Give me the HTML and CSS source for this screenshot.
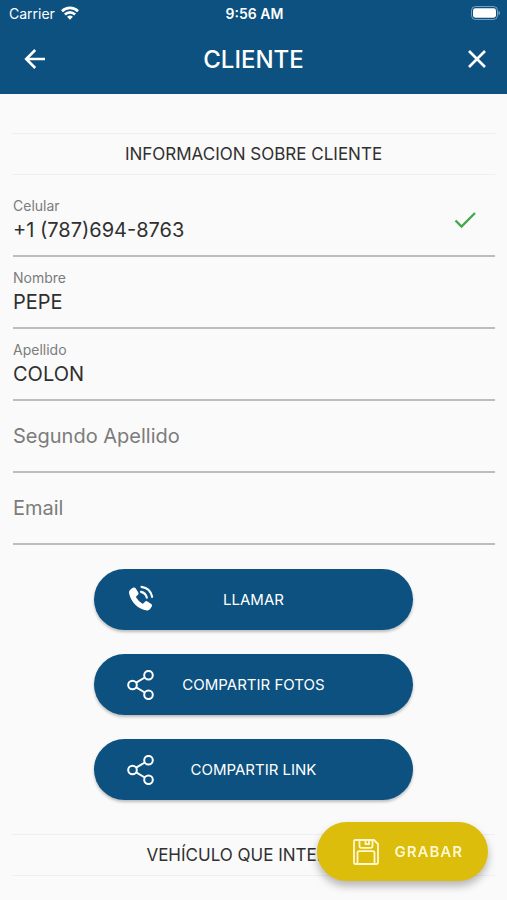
FILE: index.html
```html
<!DOCTYPE html>
<html lang="es">
<head>
	<meta charset="utf-8" />
	<meta name="viewport" content="width=device-width,initial-scale=1.0" />
	<title>Cliente</title>
	<link rel="stylesheet" href="styles.css">
</head>
<body>
<header class="header">
	<div class="status">
		<div class="carrier">
			<span>Carrier</span>
			<svg width="18" height="14" viewBox="0 0 18 14" fill="none" stroke="#fff" stroke-width="2.6">
				<path d="M1 5.2a11.4 11.4 0 0 1 16 0"/>
				<path d="M3.9 8.5a7.2 7.2 0 0 1 10.2 0"/>
				<path d="M9 13.8l-2.9-3a4.2 4.2 0 0 1 5.8 0z" fill="#fff" stroke="none"/>
			</svg>
		</div>
		<span class="time">9:56 AM</span>
		<div class="battery">
			<svg width="31" height="14" viewBox="0 0 31 14">
				<rect x="2.5" y="0.5" width="26" height="13" rx="4" fill="none" stroke="#fff" stroke-opacity="0.45"/>
				<rect x="4" y="2.3" width="23" height="9.4" rx="2.4" fill="#fff"/>
				<path d="M29.5 4.8q1.5.8 1.5 2.2t-1.5 2.2z" fill="#fff" fill-opacity="0.5"/>
			</svg>
		</div>
	</div>
	<div class="navbar">
		<button type="button" class="icon-btn back" aria-label="Volver">
			<svg width="22" height="22" viewBox="0 0 22 22" fill="none" stroke="#fff" stroke-width="2.6">
				<path d="M21 11H3M11.2 2L2.2 11l9 9"/>
			</svg>
		</button>
		<h1>CLIENTE</h1>
		<button type="button" class="icon-btn close" aria-label="Cerrar">
			<svg width="22" height="22" viewBox="0 0 22 22" fill="none" stroke="#fff" stroke-width="2.6">
				<path d="M3 3l16 16M19 3L3 19"/>
			</svg>
		</button>
	</div>
</header>

<main class="content">
	<h2 class="section-title">INFORMACION SOBRE CLIENTE</h2>
	<form class="form">
		<div class="field">
			<label for="celular">Celular</label>
			<input type="tel" id="celular" value="+1 (787)694-8763">
			<svg class="check" width="24" height="18" viewBox="0 0 24 18" fill="none" stroke="#43a94c" stroke-width="2.4">
				<path d="M2.5 9.5l6 6L22 2"/>
			</svg>
		</div>
		<div class="field">
			<label for="nombre">Nombre</label>
			<input type="text" id="nombre" value="PEPE">
		</div>
		<div class="field">
			<label for="apellido">Apellido</label>
			<input type="text" id="apellido" value="COLON">
		</div>
		<div class="field empty">
			<label for="apellido2">Segundo Apellido</label>
			<input type="text" id="apellido2">
		</div>
		<div class="field empty">
			<label for="email">Email</label>
			<input type="email" id="email">
		</div>
	</form>

	<div class="actions">
		<button type="button" class="btn">
			<svg width="28" height="30" viewBox="0 0 28 30" fill="none">
				<path d="M3.4 4.6L5.8 2.8Q7.6 1.8 8.8 3.4l2.5 4q.8 1.5-.5 2.6L9.3 11.3q-.5.6-.1 1.3 2.2 3.8 6 5.9.8.4 1.3-.2l1.4-1.5q1-1.2 2.5-.4l3.9 2.5q1.5 1.1.5 2.6l-1.9 2.8q-1 1.3-2.9 1.1-6.8-.7-11.7-5.6T2 8q-.2-2 1.4-3.4z" fill="#fff"/>
				<path d="M14 6.8q4.8 1 5.8 5.8M14.5 1.8q9 1.300 10.600 10" stroke="#fff" stroke-width="2.2" stroke-linecap="round"/>
			</svg>
			<span>LLAMAR</span>
		</button>
		<button type="button" class="btn">
			<svg width="28" height="30" viewBox="0 0 28 30" fill="none" stroke="#fff" stroke-width="2">
				<circle cx="5.5" cy="15" r="4.3"/>
				<circle cx="21.5" cy="5.2" r="4.3"/>
				<circle cx="21.5" cy="24.8" r="4.3"/>
				<path d="M9.2 12.7l8.6-5.2M9.2 17.3l8.6 5.2"/>
			</svg>
			<span>COMPARTIR FOTOS</span>
		</button>
		<button type="button" class="btn">
			<svg width="28" height="30" viewBox="0 0 28 30" fill="none" stroke="#fff" stroke-width="2">
				<circle cx="5.5" cy="15" r="4.3"/>
				<circle cx="21.5" cy="5.2" r="4.3"/>
				<circle cx="21.5" cy="24.8" r="4.3"/>
				<path d="M9.2 12.7l8.6-5.2M9.2 17.3l8.6 5.2"/>
			</svg>
			<span>COMPARTIR LINK</span>
		</button>
	</div>

	<h2 class="section-title">VEHÍCULO QUE INTERESA</h2>
</main>

<button type="button" class="save">
	<svg width="26" height="26" viewBox="0 0 26 26" fill="none" stroke="#fff8d0" stroke-width="1.8" stroke-linejoin="round">
		<path d="M2.5 1H21l4 4v18.5q0 1.500-1.500 1.500h-21Q1 25 1 23.500v-21Q1 1 2.500 1z"/>
		<path d="M6.500 1v6q0 1.800 1.800 1.800h9.400q1.800 0 1.800-1.800V1M12.500 1v4.200h3.500V1"/>
		<path d="M4.500 25V14q0-1.800 1.800-1.800h13.400q1.800 0 1.800 1.800v11"/>
	</svg>
	<span>GRABAR</span>
</button>
</body>
</html>
```

FILE: styles.css
```css
* {
	margin: 0;
	padding: 0;
	box-sizing: border-box;
}
body {
	background: #fafafa;
	color: #303030;
	font-family: Inter, "Liberation Sans", sans-serif;
}
button,input {
	font-family: inherit;
	border: none;
	background: none;
}
button {
	cursor: pointer;
}
svg {
	display: block;
	flex-shrink: 0;
}
.header {
	padding-bottom: 2px;
	background: #0c517f;
	color: #fff;
}
.status {
	display: grid;
	grid-template-columns: 1fr auto 1fr;
	align-items: center;
	height: 26px;
	padding: 0 7px 0 9px;
	font-size: 14px;
}
.carrier {
	display: flex;
	align-items: center;
	gap: 6px;
}
.time {
	font-weight: 600;
}
.battery {
	display: flex;
	justify-content: flex-end;
}
.navbar {
	display: grid;
	grid-template-columns: 1fr auto 1fr;
	align-items: center;
	height: 66px;
	padding: 0 13px;
}
.navbar h1 {
	font-size: 24px;
	font-weight: 500;
}
.icon-btn {
	display: flex;
	align-items: center;
	justify-content: center;
	height: 34px;
}
.back {
	width: 44px;
}
.close {
	justify-self: end;
	width: 34px;
}
.content {
	padding: 39px 12px 24px;
}
.section-title {
	border-top: 1px solid #efefef;
	border-bottom: 1px solid #efefef;
	font-size: 17px;
	font-weight: 400;
	line-height: 40px;
	text-align: center;
}
.form {
	margin-top: 10px;
	padding-left: 1px;
}
.field {
	display: grid;
	grid-template-columns: 1fr auto;
	grid-template-rows: 20px 28px;
	align-content: start;
	height: 72px;
	padding-top: 11px;
	border-bottom: 2px solid #bdbdbd;
}
.field label {
	color: #7c7c7c;
	font-size: 14px;
	line-height: 20px;
}
.field input {
	grid-column: 1;
	grid-row: 2;
	width: 100%;
	color: #303030;
	font-size: 20px;
	line-height: 28px;
	outline: none;
}
.field .check {
	grid-column: 2;
	grid-row: 1 / 3;
	align-self: center;
	margin-right: 18px;
}
.field.empty {
	grid-template-rows: 48px;
}
.field.empty label,.field.empty input {
	grid-column: 1;
	grid-row: 1;
	font-size: 20px;
	line-height: 48px;
}
.actions {
	display: flex;
	flex-direction: column;
	align-items: center;
	gap: 24px;
	margin: 24px 0 34px;
}
.btn {
	display: grid;
	grid-template-columns: 28px 1fr 28px;
	align-items: center;
	width: 66%;
	height: 61px;
	padding: 0 33px;
	border-radius: 31px;
	background: #0c517f;
	box-shadow: 0 2px 3px rgba(0,0,0,0.25);
	color: #fff;
	font-size: 15px;
}
.save {
	position: fixed;
	right: 19px;
	bottom: 19px;
	display: flex;
	align-items: center;
	gap: 15px;
	height: 59px;
	padding: 0 25px 0 36px;
	border-radius: 30px;
	background: #dcbd0c;
	box-shadow: 0 5px 8px rgba(0,0,0,0.28);
	color: #fff8d0;
	font-size: 15px;
	font-weight: 600;
	letter-spacing: 1px;
}
```
